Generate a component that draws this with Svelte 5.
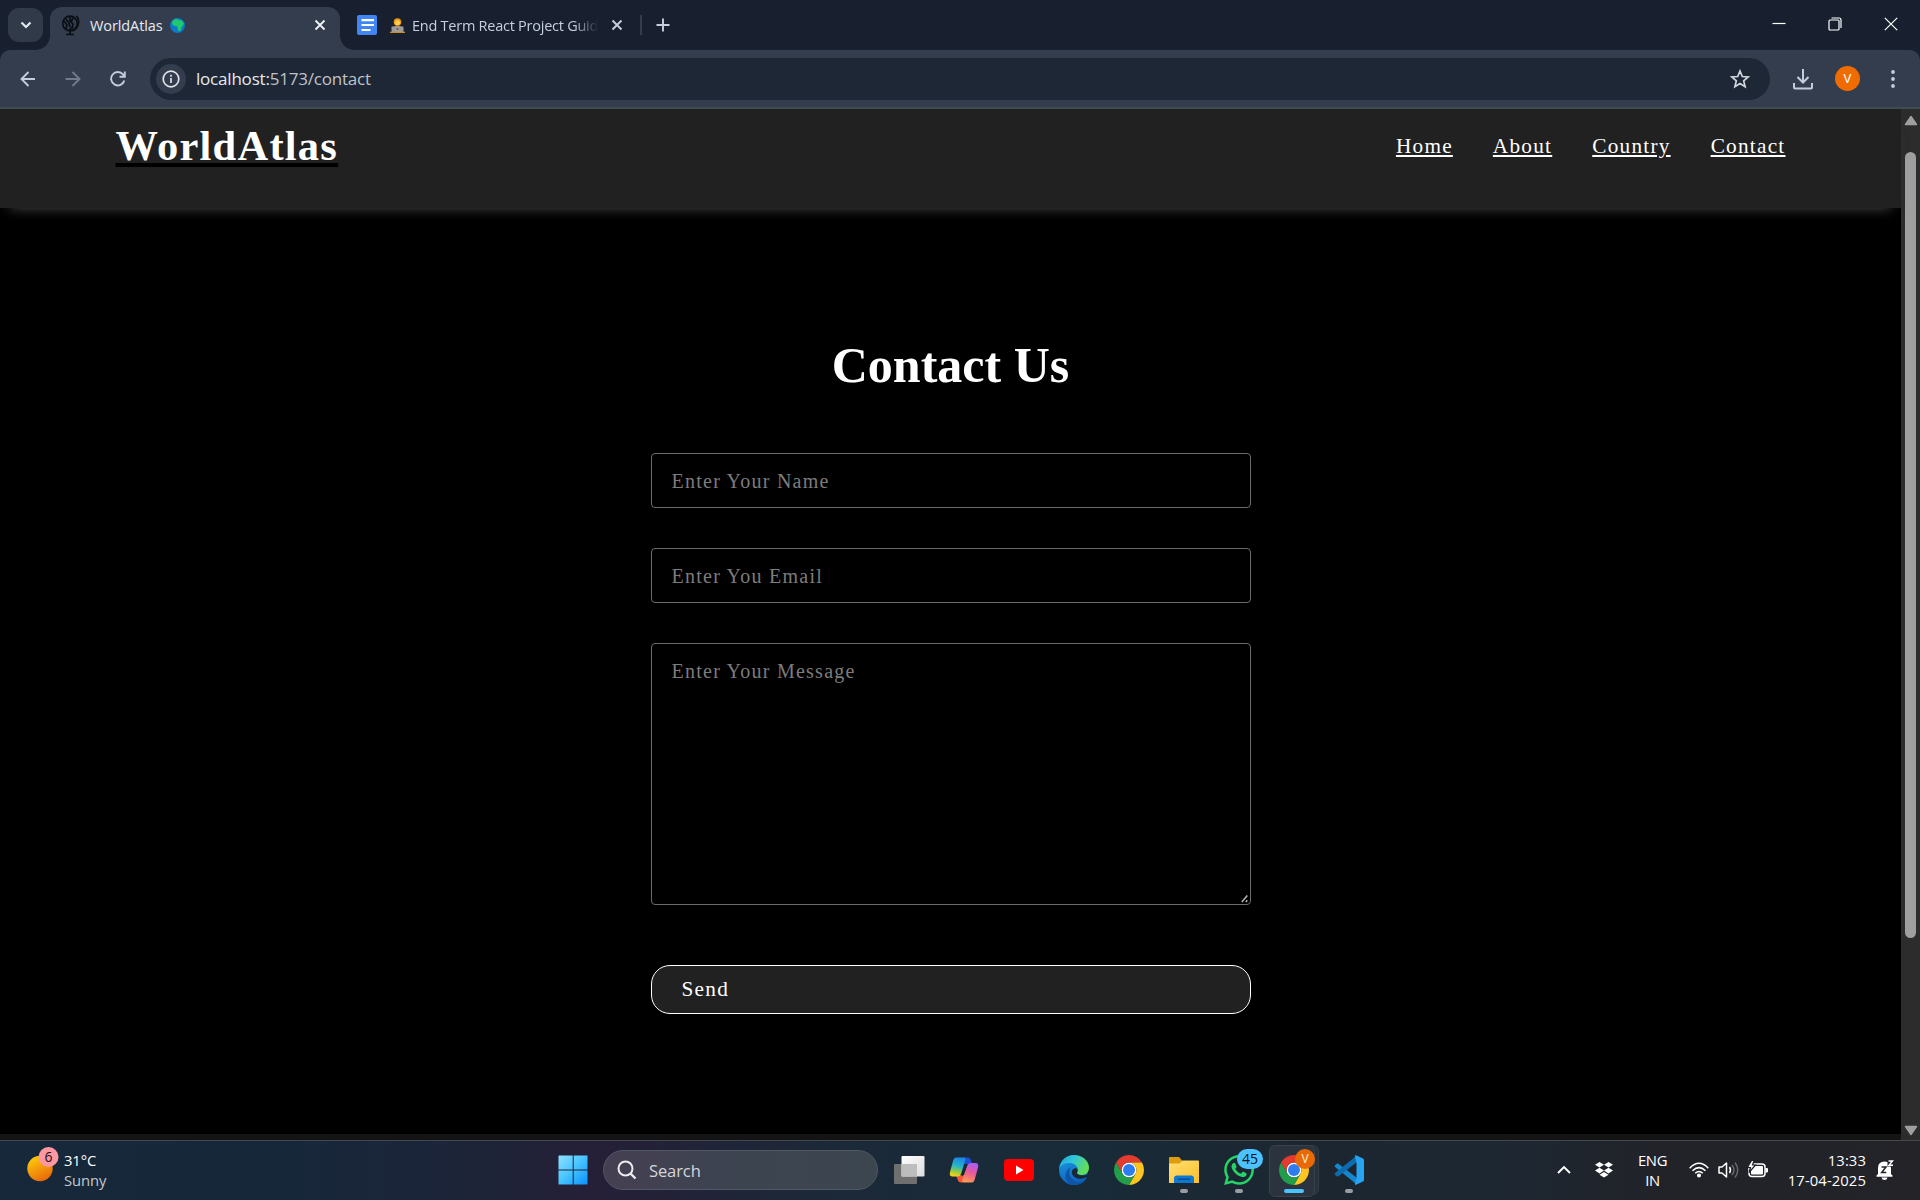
<script>
  const links = ['Home', 'About', 'Country', 'Contact'];
</script>

{#snippet chrome()}
  <svg width="30" height="30" viewBox="0 0 48 48">
    <circle cx="24" cy="24" r="12" fill="#fff" />
    <path fill="#e33b2e" d="M24 12H44.78A24 24 0 0 0 3.22 12L13.61 30A12 12 0 0 1 24 12Z" />
    <path fill="#fcc521" d="M34.39 30L24 48A24 24 0 0 0 44.78 12H24A12 12 0 0 1 34.39 30Z" />
    <path fill="#229e4a" d="M13.61 30L3.22 12A24 24 0 0 0 24 48L34.39 30A12 12 0 0 1 13.61 30Z" />
    <circle cx="24" cy="24" r="9.6" fill="#2e7df0" />
  </svg>
{/snippet}

<div class="screen">
  <div class="tabs">
    <div class="tabsearch">
      <svg width="12" height="8" viewBox="0 0 12 8"><path d="M1.5 1.5L6 6l4.500-4.500" fill="none" stroke="#e4e8ee" stroke-width="2.200" /></svg>
    </div>
    <div class="tab">
      <svg width="20" height="21" viewBox="0 0 20 21" fill="none" stroke="#0b0e13" stroke-width="1.700">
        <circle cx="9" cy="8.500" r="7.300" />
        <path d="M15.500 1c4 5 2 12-4 15M5 4l3 4 1 4M3 6l3 4-1 4M9 2v4l3 3-1 5M12 3l-2 4M8 15l4-3M9 16v3M5 19.500h8" />
      </svg>
      <span class="tabname">WorldAtlas</span>
      <svg class="earth" width="15" height="15" viewBox="0 0 15 15">
        <circle cx="7.500" cy="7.500" r="7.500" fill="#0f78cc" />
        <path d="M2.500 3Q5 .5 8 .8l-.5 1.200 4 .2 2.500 3.300-1 1 .8.500-2.300 2-.5 3-2 1.500-1.300-1.500-.2-3.500-3-.5L2 6z" fill="#1fc96c" />
      </svg>
      <svg class="close" width="12" height="12" viewBox="0 0 12 12"><path d="M1.500 1.500l9 9m0-9l-9 9" stroke="#eef0f4" stroke-width="1.900" /></svg>
    </div>
    <div class="tab2">
      <svg width="20" height="20" viewBox="0 0 20 20"><rect width="20" height="20" rx="2" fill="#4285f4" /><path d="M4.500 5.200h12.500M4.500 10h12.500M4.500 15h9" stroke="#fff" stroke-width="2.200" /></svg>
      <svg class="coder" width="15" height="15" viewBox="0 0 15 15">
        <circle cx="7.500" cy="4" r="3.800" fill="#f09a19" /><circle cx="7.500" cy="4.800" r="2.500" fill="#ffd04a" />
        <path d="M3 9q4.500-3 9 0v3H3z" fill="#cf8b25" /><rect x="1.500" y="8.500" width="12" height="5.500" rx=".8" fill="#9b9b9b" /><circle cx="7.500" cy="11" r="1" fill="#5d5870" /><path d="M0 14.300h15" stroke="#d99b32" stroke-width="1.200" />
      </svg>
      <span class="tabname long">End Term React Project Guid</span>
      <svg class="close" width="12" height="12" viewBox="0 0 12 12"><path d="M1.500 1.500l9 9m0-9l-9 9" stroke="#c5cfdf" stroke-width="1.900" /></svg>
    </div>
    <i class="sep"></i>
    <svg class="plus" width="14" height="14" viewBox="0 0 14 14"><path d="M7 .5v13M.5 7h13" stroke="#c5cfdf" stroke-width="1.900" /></svg>
    <div class="winctl">
      <svg width="14" height="14" viewBox="0 0 14 14"><path d="M.5 6.500h13" stroke="#fff" stroke-width="1.200" /></svg>
      <svg width="14" height="14" viewBox="0 0 14 14" fill="none" stroke="#fff" stroke-width="1.200"><rect x="1" y="3" width="10" height="10" rx="1" /><path d="M3.500 1h7.500q2 0 2 2v8" /></svg>
      <svg width="14" height="14" viewBox="0 0 14 14"><path d="M.8.8l12.400 12.400m0-12.400L.8 13.200" stroke="#fff" stroke-width="1.200" /></svg>
    </div>
  </div>

  <div class="toolbarwrap"><div class="toolbar">
    <svg class="back" width="16" height="16" viewBox="0 0 16 16" fill="none" stroke="#c2cde0" stroke-width="1.900"><path d="M15 8H1.500M8.500 1L1.500 8l7 7" /></svg>
    <svg class="fwd" width="16" height="16" viewBox="0 0 16 16" fill="none" stroke="#727b8b" stroke-width="1.900"><path d="M.5 8h14M7.500 1l7 7-7 7" /></svg>
    <svg class="reload" width="16" height="16" viewBox="0 0 16 16" fill="none" stroke="#c2cde0" stroke-width="1.900"><path d="M14.300 9.500A6.700 6.700 0 1 1 13 3.400L14.500 5M14.800.5v5.300H9.500" /></svg>
    <div class="address">
      <div class="info">
        <svg width="18" height="18" viewBox="0 0 18 18" fill="none" stroke="#e1e3e8" stroke-width="1.700"><circle cx="9" cy="9" r="7.800" /><path d="M9 8v5M9 4.800v1.900" /></svg>
      </div>
      <span class="url">localhost:<b>5173/contact</b></span>
      <svg class="star" width="20" height="20" viewBox="0 0 20 20"><path d="M10 2l2.300 5.500 5.900.5-4.500 3.900 1.400 5.800L10 14.600l-5.100 3.100 1.400-5.800L1.800 8l5.900-.5z" fill="none" stroke="#d3d6dc" stroke-width="1.700" /></svg>
    </div>
    <svg class="down" width="22" height="22" viewBox="0 0 22 22" fill="none" stroke="#c2cde0" stroke-width="2"><path d="M11 1v13M5.500 9l5.500 5.500L16.500 9M2 15v4.500q0 1 1 1h16q1 0 1-1V15" /></svg>
    <div class="avatar">V</div>
    <svg class="dots" width="6" height="20" viewBox="0 0 6 20" fill="#c2cde0"><circle cx="3" cy="3" r="1.900" /><circle cx="3" cy="10" r="1.900" /><circle cx="3" cy="17" r="1.900" /></svg>
  </div></div>

  <div class="view">
    <div class="page">
      <header>
        <h1>WorldAtlas</h1>
        <nav>{#each links as l}<a href="#top">{l}</a>{/each}</nav>
      </header>
      <main>
        <h2>Contact Us</h2>
        <form>
          <input placeholder="Enter Your Name" />
          <input placeholder="Enter You Email" />
          <div class="area">
            <textarea placeholder="Enter Your Message"></textarea>
            <svg class="grip" width="8" height="8" viewBox="0 0 8 8"><path d="M.8 7l5.500-6.500M4.800 7l1.500-1.700" stroke="#b0b0b0" stroke-width="1.600" /></svg>
          </div>
          <button type="button">Send</button>
        </form>
      </main>
      <div class="foot"></div>
    </div>
    <div class="scroll">
      <svg width="14" height="11" viewBox="0 0 14 11"><path d="M7 1.500L12.500 9.500H1.500z" fill="#9f9f9f" stroke="#9f9f9f" stroke-width="1.500" stroke-linejoin="round" /></svg>
      <i class="thumb"></i>
      <svg class="dn" width="14" height="11" viewBox="0 0 14 11"><path d="M7 9.500L12.500 1.500H1.500z" fill="#9f9f9f" stroke="#9f9f9f" stroke-width="1.500" stroke-linejoin="round" /></svg>
    </div>
  </div>

  <footer class="taskbar">
    <div class="weather">
      <svg width="33" height="36" viewBox="0 0 33 36">
        <defs><linearGradient id="sun" x1=".2" y1="0" x2=".7" y2="1"><stop offset="0" stop-color="#ffce0a" /><stop offset="1" stop-color="#e8660a" /></linearGradient></defs>
        <circle cx="13" cy="22.500" r="12.700" fill="url(#sun)" /><circle cx="21.500" cy="11" r="10" fill="#fd98a3" />
        <text x="21.500" y="16" text-anchor="middle" font-size="14" fill="#1b1012">6</text>
      </svg>
      <div class="wtext"><span>31°C</span><span class="dim">Sunny</span></div>
    </div>
    <div class="start">
      <svg width="30" height="30" viewBox="0 0 30 30">
        <defs><linearGradient id="win" x1="0" y1="0" x2="1" y2="1"><stop offset="0" stop-color="#8fe3ff" /><stop offset=".5" stop-color="#45c3ff" /><stop offset="1" stop-color="#0b90fb" /></linearGradient></defs>
        <path d="M1 .5h13.700v14H.5V1zM15.700.5h13.800v14H15.700zM.5 15.500h14.200v14H.5zM15.700 15.500h13.800v14H15.700z" fill="url(#win)" />
      </svg>
    </div>
    <div class="search">
      <svg width="20" height="20" viewBox="0 0 20 20" fill="none" stroke="#ececf0" stroke-width="2"><circle cx="8.500" cy="8.500" r="7" /><path d="M13.500 13.500l5 5" stroke-width="2.400" /></svg>
      <span>Search</span>
    </div>
    <div class="apps">
      <div class="app"><svg width="32" height="30" viewBox="0 0 32 30">
        <defs><linearGradient id="tv" x1="0" y1="0" x2="1" y2="1"><stop offset="0" stop-color="#fff" /><stop offset="1" stop-color="#dcdcdc" /></linearGradient></defs>
        <rect x="1" y="9" width="23" height="20" rx="1" fill="#6f6f6f" /><rect x="8.500" y="1" width="23" height="20.500" rx="1" fill="url(#tv)" /><path d="M8.500 9H24v12.500H8.500z" fill="#bdbdbd" />
      </svg></div>
      <div class="app"><svg width="30" height="28" viewBox="0 0 30 28">
        <defs>
          <linearGradient id="c1" x1=".5" y1="0" x2=".3" y2="1"><stop offset="0" stop-color="#1a86e8" /><stop offset=".45" stop-color="#2ab7c4" /><stop offset=".75" stop-color="#9ccb3e" /><stop offset="1" stop-color="#ffd21e" /></linearGradient>
          <linearGradient id="c2" x1=".6" y1="0" x2=".3" y2="1"><stop offset="0" stop-color="#a95cf5" /><stop offset=".45" stop-color="#e8599c" /><stop offset="1" stop-color="#ff9a52" /></linearGradient>
        </defs>
        <path d="M7 19h8l-1 7.500h-2Q9.500 26.500 8.800 24z" fill="#f4573c" /><path d="M14 1.500h5q2 0 2.800 2.500L23 8h-8z" fill="#1e4fd6" />
        <path d="M7 1.500H15Q17 1.500 16.300 4L12 18Q11 20.500 8 20.500H3Q0 20 1 16L4 5Q5 1.500 7 1.500z" fill="url(#c1)" />
        <path d="M23 26.500H15Q12.500 26.500 13.500 23.500L18 10Q19 7 22 7h5Q30 7.500 29 11.500L26 22.500Q25 26.500 23 26.500z" fill="url(#c2)" />
        <path d="M16.500 8.500l1.800.5-4.500 11-1.600-.5z" fill="#1c2a35" />
      </svg></div>
      <div class="app"><svg width="30" height="22" viewBox="0 0 30 22"><rect width="30" height="22" rx="4" fill="#f00" /><path d="M12 6.500l7.500 4.500-7.500 4.500z" fill="#fff" /></svg></div>
      <div class="app"><svg width="30" height="30" viewBox="0 0 30 30">
        <defs>
          <linearGradient id="e1" x1="0" y1="0" x2="1" y2=".4"><stop offset="0" stop-color="#1fa6dc" /><stop offset=".5" stop-color="#31c6d8" /><stop offset="1" stop-color="#63de58" /></linearGradient>
          <linearGradient id="e2" x1="0" y1="0" x2=".4" y2="1"><stop offset="0" stop-color="#1c9de0" /><stop offset="1" stop-color="#0c62c0" /></linearGradient>
        </defs>
        <path d="M15 0A15 15 0 1 0 27.500 23.300L30 12z" fill="url(#e2)" />
        <path d="M.3 13C1.500 5 8 0 15 0c8.500 0 15 6 15 12.500 0 5-3.500 7.500-7.500 7.500-3 0-5-1-4.500-2.500.8-1.200 1.300-2.200 1-3.500C18 10 14 8 10 8 5.500 8 2 10 .3 13z" fill="url(#e1)" />
        <path d="M12 12c-4 5-1 13 6 15 4 1 7.500-1 9.500-3.700C25 28 20 30 15.500 30 9 30 5 24 7 18c1-3 3-5 5-6z" fill="#0d55a3" />
        <path d="M17 13c-5 .5-5.500 6-1.500 9 4 2.800 8.500 2 12 .3 .8-.4 1.200 0 .8.700L31 24V17l-3 2.500C24 21.500 17.500 19.500 18 17.700c.8-1.200 1.300-2.700-1-4.700z" fill="#1b2833" />
      </svg></div>
      <div class="app">{@render chrome()}</div>
      <div class="app run"><svg width="30" height="28" viewBox="0 0 30 28">
        <defs><linearGradient id="fd" x1="0" y1="0" x2="1" y2="1"><stop offset="0" stop-color="#ffdf74" /><stop offset="1" stop-color="#fdbf28" /></linearGradient></defs>
        <path d="M0 2q0-1 1-1h9l3.500 4H29v6H0z" fill="#dd9e0b" /><path d="M0 7.500h10.500l3-3h15.500q1 0 1 1V27H0z" fill="url(#fd)" />
        <path d="M5 27v-4.500q0-3 3-3h14q3 0 3 3V27z" fill="#0f78d0" /><path d="M9 23.200h12" stroke="#0a4d91" stroke-width="1.500" />
      </svg></div>
      <div class="app run"><svg width="30" height="30" viewBox="0 0 24 24" fill="#25d366"><path d="M17.472 14.382c-.297-.149-1.758-.867-2.030-.967-.273-.099-.471-.148-.67.15-.197.297-.767.966-.94 1.164-.173.199-.347.223-.644.075-.297-.15-1.255-.463-2.390-1.475-.883-.788-1.480-1.761-1.653-2.059-.173-.297-.018-.458.13-.606.134-.133.298-.347.446-.52.149-.174.198-.298.298-.497.099-.198.05-.371-.025-.52-.075-.149-.669-1.612-.916-2.207-.242-.579-.487-.5-.669-.51-.173-.008-.371-.01-.57-.01-.198 0-.52.074-.792.372-.272.297-1.040 1.016-1.040 2.479 0 1.462 1.065 2.875 1.213 3.074.149.198 2.096 3.200 5.077 4.487.709.306 1.262.489 1.694.625.712.227 1.360.195 1.871.118.571-.085 1.758-.719 2.006-1.413.248-.694.248-1.289.173-1.413-.074-.124-.272-.198-.57-.347m-5.421 7.403h-.004a9.870 9.870 0 01-5.031-1.378l-.361-.214-3.741.982.998-3.648-.235-.374a9.860 9.860 0 01-1.510-5.260c.001-5.450 4.436-9.884 9.888-9.884 2.640 0 5.122 1.030 6.988 2.898a9.825 9.825 0 012.893 6.994c-.003 5.450-4.437 9.884-9.885 9.884m8.413-18.297A11.815 11.815 0 0012.050 0C5.495 0 .16 5.335.157 11.892c0 2.096.547 4.142 1.588 5.945L.057 24l6.305-1.654a11.882 11.882 0 005.683 1.448h.005c6.554 0 11.890-5.335 11.893-11.893a11.821 11.821 0 00-3.480-8.413z" /></svg><em class="badge">45</em></div>
      <div class="app run active"><i class="stack"></i>{@render chrome()}<em class="vbadge">V</em></div>
      <div class="app run"><svg width="30" height="30" viewBox="0 0 30 30">
        <path d="M1 10.200l2-1.600q.7-.4 1.400.1L22.500 22.500v6.700L1 12q-.8-1 0-1.800z" fill="#1487cf" />
        <path d="M1 19.800l2 1.600q.7.4 1.400-.1L22.500 7.500V.8L1 18q-.8 1 0 1.800z" fill="#0d6cb0" />
        <path d="M22 .2l7 3.200q1 .5 1 1.500v20.200q0 1-1 1.500l-7 3.200q-1.500.3-1-1L22.500 22V8L21 1.200q-.5-1.300 1-1z" fill="#27a3f2" />
      </svg></div>
    </div>
    <div class="tray">
      <svg class="t1" width="14" height="9" viewBox="0 0 14 9"><path d="M1 8l6-6 6 6" fill="none" stroke="#fff" stroke-width="1.900" /></svg>
      <svg class="t2" width="18" height="16" viewBox="0 0 18 16" fill="#fff"><path d="M4.500 0L9 2.800 4.500 5.600 0 2.800zM13.500 0L18 2.800l-4.500 2.800L9 2.800zM4.500 5.800L9 8.600l-4.500 2.800L0 8.600zM13.500 5.800L18 8.600l-4.500 2.800L9 8.600zM9 10l4.500 2.700L9 15.600l-4.500-2.900z" /></svg>
      <div class="lang"><span>ENG</span><span>IN</span></div>
      <svg class="t3" width="20" height="16" viewBox="0 0 20 16" fill="none" stroke="#fff" stroke-width="1.500"><path d="M.7 6.200Q10-3.500 19.300 6.200M3.500 8.800q6.500-6.300 13 0M6.200 11.300q3.800-3.600 7.600 0" /><circle cx="10" cy="13.500" r="1.300" fill="#fff" /></svg>
      <svg class="t4" width="21" height="18" viewBox="0 0 21 18" fill="none" stroke="#fff" stroke-width="1.500"><path d="M1 6v6h3l4.500 4V2L4 6z" stroke-linejoin="round" /><path d="M11.500 6q2 3 0 6" /><path d="M14 4q4 5 0 10M17 1.500q5.500 7.500 0 15" stroke="#65676e" /></svg>
      <svg class="t5" width="20" height="17" viewBox="0 0 20 17"><rect x="1" y="3" width="16" height="12.500" rx="3" fill="none" stroke="#fff" stroke-width="1.500" /><rect x="3" y="5" width="12" height="8.500" rx="1" fill="#fff" /><path d="M17.500 7v4.500H19q1 0 1-1V8q0-1-1-1z" fill="#fff" /><path d="M3.500-.5L-.5 6.500h3L1 11.500 7.500 4h-3L6-.5z" fill="#fff" stroke="#212328" stroke-width="1.200" /></svg>
      <div class="clock"><span>13:33</span><span>17-04-2025</span></div>
      <svg class="t6" width="18" height="20" viewBox="0 0 18 20"><path d="M2 14V8q0-6.500 6.500-6.500T15 8v6l1.500 1.500v1.200H.5v-1.200zM5.500 17.500h6Q11 20 8.500 20T5.500 17.500z" fill="#fff" /><path d="M11.500 0H18v6.500h-6.500z" fill="#212328" /><path d="M5.500 7h4.500L5.700 12.500h4.600" fill="none" stroke="#212328" stroke-width="1.500" /><path d="M12.500 1h4L13 5.300h4" fill="none" stroke="#fff" stroke-width="1.400" /></svg>
    </div>
  </footer>
</div>

<style>
  :global(body) { background: #000; overflow: hidden; }
  .screen { width: 1920px; height: 1200px; display: flex; flex-direction: column; overflow: hidden; font-family: 'Open Sans', 'Noto Sans', sans-serif; color: #fff; }
  svg { display: block; flex: none; }
  .screen * { box-sizing: border-box; }

  .tabs { height: 50px; background: #18202f; display: flex; padding-left: 8px; flex: none; }
  .tabsearch { width: 35px; height: 34px; margin: 8px 7px 0 0; border-radius: 11px; background: #303a49; display: flex; align-items: center; justify-content: center; }
  .tab { position: relative; width: 290px; height: 43px; margin-top: 7px; background: #333d4e; border-radius: 12px 12px 0 0; display: flex; padding: 8px 14px 0 11px; align-items: flex-start; }
  .tab::before, .tab::after { content: ''; position: absolute; bottom: 0; width: 14px; height: 14px; }
  .tab::before { left: -14px; background: radial-gradient(circle at 0 0, transparent 13.500px, #333d4e 14px); }
  .tab::after { right: -14px; background: radial-gradient(circle at 100% 0, transparent 13.500px, #333d4e 14px); }
  .tabname { font-size: 14.500px; line-height: 22px; margin-left: 9px; color: #e6e9ee; letter-spacing: -0.1px; white-space: nowrap; }
  .earth { margin: 3px 0 0 7px; }
  .close { margin: 4px 0 0 auto; }
  .tab2 { width: 285px; display: flex; align-items: flex-start; padding: 15px 0 0 17px; }
  .tab2 .coder { margin: 3px 0 0 13px; }
  .tabname.long { margin-left: 7px; width: 188px; letter-spacing: -0.250px; color: #c5cfdf; mask-image: linear-gradient(90deg, #000 162px, transparent 186px); }
  .tab2 .close { margin: 4px 0 0 11px; }
  .sep { width: 2px; height: 20px; background: #333d4e; margin: 15px 0 0 15px; }
  .plus { margin: 18px 0 0 14px; }
  .winctl { margin-left: auto; display: flex; gap: 42px; padding: 17px 22px 0 0; }

  .toolbarwrap { background: #18202f; height: 59px; flex: none; }
  .toolbar { height: 59px; background: #333d4e; border-radius: 10px 10px 0 0; border-bottom: 2px solid #414c50; display: flex; align-items: center; }
  .back { margin-left: 20px; }
  .fwd { margin-left: 29px; }
  .reload { margin-left: 29px; }
  .address { width: 1620px; height: 42px; margin-left: 24px; border-radius: 21px; background: #1e2736; display: flex; align-items: center; padding: 0 20px 0 6px; }
  .info { width: 30px; height: 30px; border-radius: 50%; background: #333d4e; display: flex; align-items: center; justify-content: center; }
  .url { margin-left: 10px; padding-top: 1px; font-size: 17px; line-height: 24px; color: #e8eaed; letter-spacing: -0.2px; }
  .url b { font-weight: 400; color: #bfc3c9; }
  .star { margin-left: auto; }
  .down { margin-left: 22px; }
  .avatar { width: 25px; height: 25px; margin-left: 21px; border-radius: 50%; background: #f06c00; font: 13px/25px Roboto, sans-serif; text-align: center; }
  .dots { margin-left: 30px; }

  .view { height: 1031px; flex: none; display: flex; }
  .page { width: 1901px; background: #000; font-family: 'Liberation Serif', serif; letter-spacing: 1.250px; display: flex; flex-direction: column; }
  header { height: 99px; flex: none; background: #212121; display: flex; justify-content: space-between; padding: 0 115.500px 0 115.500px; box-shadow: 0 10px 12px -10px #4c4c4c; position: relative; }
  h1 { margin: 12px 0 0; font-size: 42.500px; line-height: 50px; text-decoration: underline #000 4px; text-underline-offset: 3px; }
  nav { display: flex; gap: 40px; padding-top: 25px; }
  nav a { color: #fff; font-size: 21.250px; line-height: 25px; text-decoration: underline 2px; text-underline-offset: 2px; }
  main { flex: 1; display: flex; flex-direction: column; align-items: center; }
  h2 { margin: 128px 0 0; font-size: 50px; line-height: 58px; letter-spacing: 0; }
  form { margin-top: 59px; width: 600px; display: flex; flex-direction: column; }
  input, textarea { width: 600px; border: 1px solid #6b6b6b; border-radius: 4px; background: #000; font: 20px/23px 'Liberation Serif', serif; letter-spacing: 1.250px; padding: 16px 19px 14px 20px; outline: none; color: #fff; }
  input { height: 55px; margin-bottom: 40px; }
  input::placeholder, textarea::placeholder { color: #7c7c7c; opacity: 1; }
  .area { position: relative; height: 262px; }
  textarea { display: block; height: 262px; resize: none; }
  .grip { position: absolute; right: 2px; bottom: 2px; }
  button { margin-top: 60px; height: 49px; border: 1px solid #fff; border-radius: 19px; background: #212121; color: #fff; font: 21.250px/25px 'Liberation Serif', serif; letter-spacing: 1.250px; text-align: left; padding: 0 30px; }
  .foot { height: 6px; background: #141414; }
  .scroll { width: 19px; background: #2c2c2c; display: flex; flex-direction: column; align-items: center; padding: 6px 0 4px; }
  .thumb { width: 11px; height: 786px; margin-top: 26px; border-radius: 6px; background: #9f9f9f; }
  .dn { margin-top: auto; }

  .taskbar { height: 60px; flex: none; border-top: 1px solid #43484f; display: flex; background: linear-gradient(90deg, #17283a 0, #17273a 15%, #1d2438 25%, #251f37 31%, #1b2938 44%, #182b38 57%, #1c2630 68%, #1d2732 78%, #212329 86%, #232328 100%); font-size: 14.800px; letter-spacing: -0.1px; }
  .weather { width: 552px; display: flex; padding: 5px 0 0 27px; }
  .wtext { display: flex; flex-direction: column; padding-top: 4px; margin-left: 4px; line-height: 20px; }
  .dim { color: #c3c8cf; }
  .start { width: 51px; padding: 14px 0 0 5.500px; }
  .search { width: 275px; height: 40px; margin-top: 9px; border-radius: 20px; background: linear-gradient(90deg, #453f52, #3c4450 50%, #3c464f); border: 1px solid #505865; display: flex; align-items: center; padding-left: 13px; gap: 12px; font-size: 16.500px; color: #d4d6dc; }
  .apps { display: flex; padding-left: 3px; }
  .app { width: 55px; height: 57px; display: flex; align-items: center; justify-content: center; position: relative; }
  .run::after { content: ''; position: absolute; bottom: 5px; left: 24px; width: 8px; height: 4px; border-radius: 2px; background: #9a9da2; }
  .app.active::before { content: ''; position: absolute; left: 3px; top: 4px; width: 44px; height: 50px; border-radius: 6px; background: #2b343e; border: 1px solid #39414a; z-index: 1; }
  .stack { position: absolute; left: 13px; top: 4px; width: 40px; height: 50px; border-radius: 6px; background: #28313a; border: 1px solid #343c45; }
  .active :global(svg) { position: relative; z-index: 2; }
  .active::after { left: 18px; width: 20px; background: #4cc2ff; z-index: 2; }
  .badge { position: absolute; left: 26px; top: 8px; width: 26px; height: 20px; border-radius: 10px; background: #4cc2ff; color: #06121b; font-style: normal; font-size: 14px; line-height: 20px; text-align: center; }
  .vbadge { position: absolute; z-index: 3; left: 29px; top: 8px; width: 20px; height: 20px; border-radius: 50%; background: #e96a05; font: 12px/20px Roboto, sans-serif; text-align: center; color: #ffe9d5; }
  .tray { margin-left: auto; display: flex; align-items: center; padding-right: 26px; height: 57px; }
  .t2 { margin-left: 24px; }
  .lang { margin-left: 24px; width: 31px; display: flex; flex-direction: column; align-items: center; line-height: 20px; letter-spacing: -0.3px; }
  .t3 { margin-left: 21px; }
  .t4 { margin-left: 9px; }
  .t5 { margin-left: 9px; }
  .clock { margin-left: 10px; width: 88px; display: flex; flex-direction: column; align-items: flex-end; line-height: 20px; letter-spacing: 0.100px; }
  .t6 { margin-left: 10px; }
</style>
